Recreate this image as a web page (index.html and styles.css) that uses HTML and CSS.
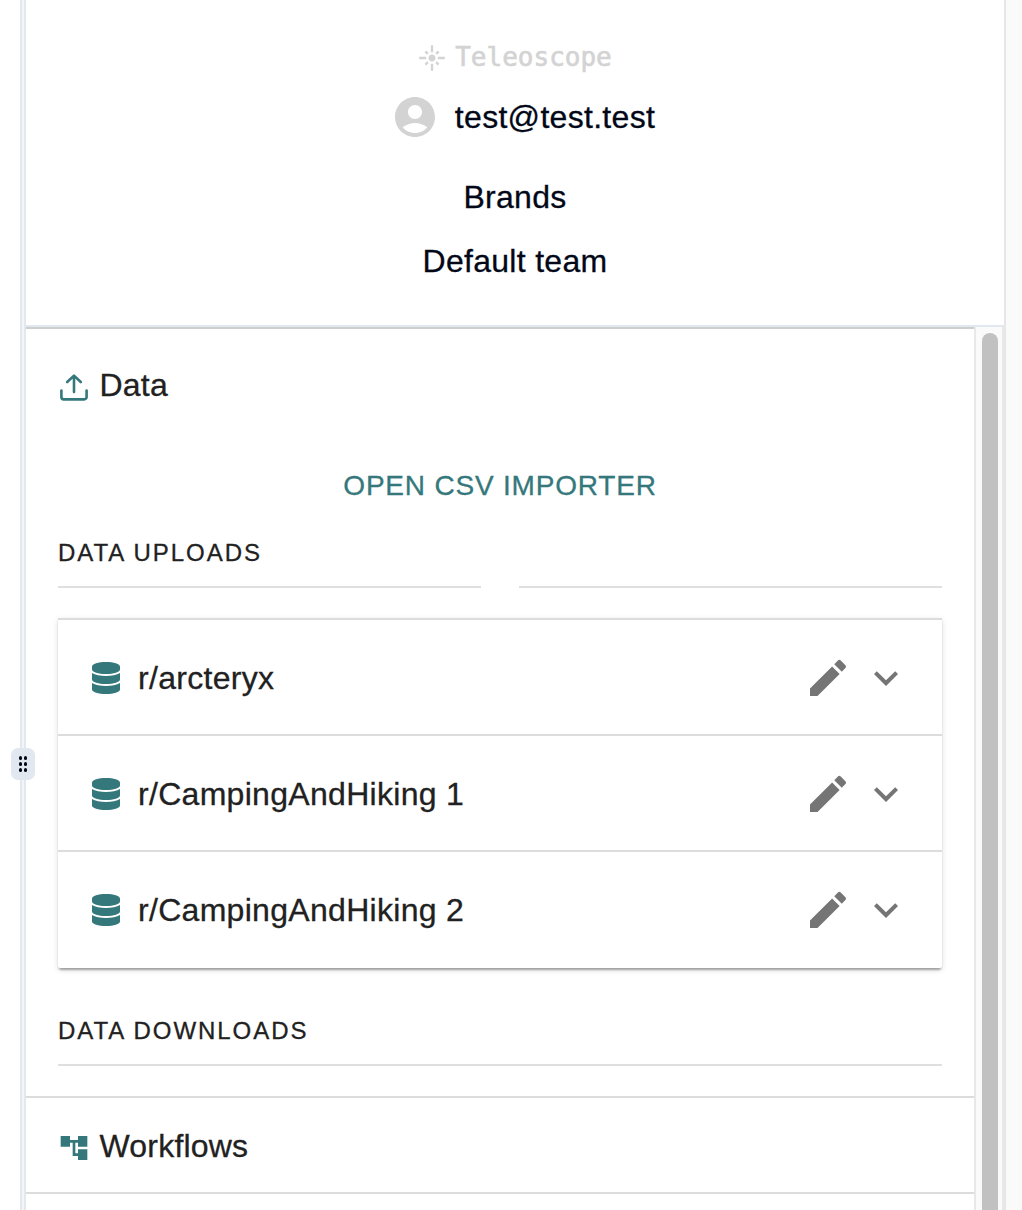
FILE: index.html
```html
<!DOCTYPE html>
<html lang="en">
<head>
<meta charset="utf-8">
<title>Teleoscope</title>
<link rel="stylesheet" href="styles.css">
</head>
<body>
<svg class="defs" aria-hidden="true">
  <symbol id="database" viewBox="0 0 448 512"><path d="M448 73.143v45.714C448 159.143 347.667 192 224 192S0 159.143 0 118.857V73.143C0 32.857 100.333 0 224 0s224 32.857 224 73.143zM448 176v102.857C448 319.143 347.667 352 224 352S0 319.143 0 278.857V176c48.125 33.143 136.208 48.572 224 48.572S399.874 209.143 448 176zm0 160v102.857C448 479.143 347.667 512 224 512S0 479.143 0 438.857V336c48.125 33.143 136.208 48.572 224 48.572S399.874 369.143 448 336z"/></symbol>
  <symbol id="edit" viewBox="0 0 24 24"><path d="M3 17.25V21h3.75L17.81 9.94l-3.75-3.75L3 17.25zM20.71 7.04c.39-.39.39-1.02 0-1.41l-2.34-2.34a.9959.9959 0 0 0-1.41 0l-1.83 1.83 3.75 3.75 1.83-1.83z"/></symbol>
  <symbol id="expand" viewBox="0 0 24 24"><path d="M16.59 8.59 12 13.17 7.41 8.59 6 10l6 6 6-6z"/></symbol>
</svg>
<div class="app">
  <div class="canvas"></div>
  <div class="divider">
    <div class="handle"><i></i><i></i><i></i><i></i><i></i><i></i></div>
  </div>
  <aside class="sidebar">
    <header class="header">
      <div class="brand">
        <svg width="28" height="28" viewBox="0 0 24 24"><path d="M7 11H1v2h6v-2zm2.17-3.24L7.05 5.64 5.64 7.05l2.12 2.12 1.41-1.41zM13 1h-2v6h2V1zm5.36 6.05l-1.41-1.41-2.12 2.12 1.41 1.41 2.12-2.12zM17 11v2h6v-2h-6zm-5-2c-1.66 0-3 1.34-3 3s1.34 3 3 3 3-1.34 3-3-1.34-3-3-3zm2.83 7.24l2.12 2.12 1.41-1.41-2.12-2.12-1.41 1.41zm-9.19.71l1.41 1.41 2.12-2.12-1.41-1.41-2.12 2.12zM11 23h2v-6h-2v6z"/></svg>
        <span>Teleoscope</span>
      </div>
      <div class="user">
        <svg width="48" height="48" viewBox="0 0 24 24"><path d="M12 2C6.48 2 2 6.48 2 12s4.48 10 10 10 10-4.48 10-10S17.52 2 12 2zm0 4c1.93 0 3.5 1.57 3.5 3.5S13.93 13 12 13s-3.5-1.57-3.5-3.5S10.07 6 12 6zm0 14c-2.03 0-4.43-.82-6.14-2.88C7.55 15.8 9.68 15 12 15s4.45.8 6.14 2.12C16.43 19.18 14.03 20 12 20z"/></svg>
        <span>test@test.test</span>
      </div>
      <div class="workspace">Brands</div>
      <div class="team">Default team</div>
    </header>
    <div class="scroller">
      <main class="content">
        <section class="section data">
          <h2 class="heading">
            <svg width="32" height="32" viewBox="0 0 32 32" fill="none" stroke="currentColor" stroke-width="2.6" stroke-linecap="round" stroke-linejoin="round"><path d="M3.4 19.6V26a2.4 2.4 0 0 0 2.4 2.4h20.4a2.4 2.4 0 0 0 2.4-2.4v-6.4M16 21V5M9.2 11 16 4.6l6.8 6.4"/></svg>
            <span>Data</span>
          </h2>
          <div class="import">OPEN CSV IMPORTER</div>
          <h3 class="overline">DATA UPLOADS</h3>
          <div class="rules"><span></span><span></span></div>
          <div class="uploads">
            <div class="row"><svg class="db"><use href="#database"/></svg><span class="name">r/arcteryx</span><svg class="action"><use href="#edit"/></svg><svg class="action expand"><use href="#expand"/></svg></div>
            <div class="row"><svg class="db"><use href="#database"/></svg><span class="name">r/CampingAndHiking 1</span><svg class="action"><use href="#edit"/></svg><svg class="action expand"><use href="#expand"/></svg></div>
            <div class="row"><svg class="db"><use href="#database"/></svg><span class="name">r/CampingAndHiking 2</span><svg class="action"><use href="#edit"/></svg><svg class="action expand"><use href="#expand"/></svg></div>
          </div>
          <h3 class="overline downloads">DATA DOWNLOADS</h3>
          <div class="rules"><span></span></div>
        </section>
        <section class="section workflows">
          <h2 class="heading">
            <svg width="32" height="32" viewBox="0 0 24 24" fill="currentColor"><path d="M22 11V3h-7v3H9V3H2v8h7V8h2v10h4v3h7v-8h-7v3h-2V8h2v3z"/></svg>
            <span>Workflows</span>
          </h2>
        </section>
      </main>
      <div class="track"><div class="thumb"></div></div>
    </div>
  </aside>
  <div class="gutter"></div>
</div>
</body>
</html>
```
FILE: styles.css
```css
* { box-sizing: border-box; }
body {
  margin: 0;
  background: #fff;
  color: #212121;
  font: 32px/48px "Liberation Sans", Arial, sans-serif;
  letter-spacing: 0.3px;
  -webkit-text-stroke: 0.3px currentColor;
}
svg { display: block; flex: none; }
h2, h3 { margin: 0; font-weight: 400; }
.defs { display: none; }
.app { display: flex; height: 1210px; overflow: hidden; }
.canvas { width: 20px; }
.divider {
  position: relative;
  width: 6px;
  background: #f5f5f5;
  border: solid #e2e8f0;
  border-width: 0 2px;
}
.handle {
  position: absolute;
  left: -11px;
  top: 748px;
  width: 24px;
  height: 32px;
  padding: 8px 7px;
  display: grid;
  grid-template-columns: 4px 4px;
  grid-auto-rows: 4px;
  gap: 2px 1px;
  justify-content: center;
  place-items: center;
  border-radius: 7px;
  background: #e2e8f0;
}
.handle i { width: 3.4px; height: 3.4px; border-radius: 50%; background: #020817; }
.sidebar { width: 978px; display: flex; flex-direction: column; }
.header {
  height: 327px;
  padding-top: 42px;
  display: flex;
  flex-direction: column;
  align-items: center;
  border-bottom: 2px solid #e2e8f0;
  color: #020817;
}
.brand {
  display: flex;
  align-items: center;
  gap: 9px;
  height: 32px;
  color: #d3d3d3;
  font: 26px/32px "DejaVu Sans Mono", monospace;
  letter-spacing: 0;
  -webkit-text-stroke: 0.6px currentColor;
}
.brand span { padding-bottom: 2px; }
.brand svg, .user svg { fill: #d3d3d3; }
.user { display: flex; align-items: center; gap: 16px; margin: 19px 0 32px; padding-left: 16px; }
.team { margin-top: 16px; }
.scroller { flex: 1; display: flex; min-height: 0; }
.content { flex: 1; border-top: 2px solid #cecece; }
.section { padding: 0 32px; border-bottom: 2px solid #dcdcdc; }
.data { height: 769px; padding-top: 32px; }
.workflows { height: 96px; padding-top: 24px; }
.heading { display: flex; align-items: center; gap: 9.5px; font-size: 32px; letter-spacing: 0.2px; }
.heading svg { color: #35787c; margin-top: 4px; }
.import {
  margin-top: 53px;
  text-align: center;
  color: #35787c;
  font-size: 28px;
  letter-spacing: 0.8px;
}
.overline { margin-top: 19px; font-size: 24px; letter-spacing: 1.95px; }
.rules { display: flex; gap: 38px; margin-top: 9px; }
.rules span { flex: 1; height: 2px; background: #dfdfdf; }
.uploads {
  margin-top: 30px;
  background: #fff;
  border-radius: 0 0 2px 2px;
  box-shadow: 0 4px 2px -2px rgba(0,0,0,.2), 0 2px 2px rgba(0,0,0,.14), 0 2px 6px rgba(0,0,0,.12);
}
.row {
  display: flex;
  align-items: center;
  height: 116px;
  padding: 2px 32px 0 34px;
  border-top: 2px solid #dcdcdc;
}
.row:last-child { height: 118px; padding-bottom: 2px; }
.db { width: 28px; height: 32px; margin-right: 18px; fill: #35787c; }
.name { flex: 1; }
.action { width: 48px; height: 48px; fill: #757575; }
.expand { margin-left: 10px; }
.downloads { margin-top: 39px; }
.track {
  width: 30px;
  padding: 6px 4px 0 6px;
  background: #fafafa;
  border: solid #e8e8e8;
  border-width: 0 2px;
}
.thumb { width: 16px; height: 100%; border-radius: 8px 8px 0 0; background: #c1c1c1; }
.gutter { flex: 1; background: #fafafa; border-left: 2px solid #e6e6e6; }
```
